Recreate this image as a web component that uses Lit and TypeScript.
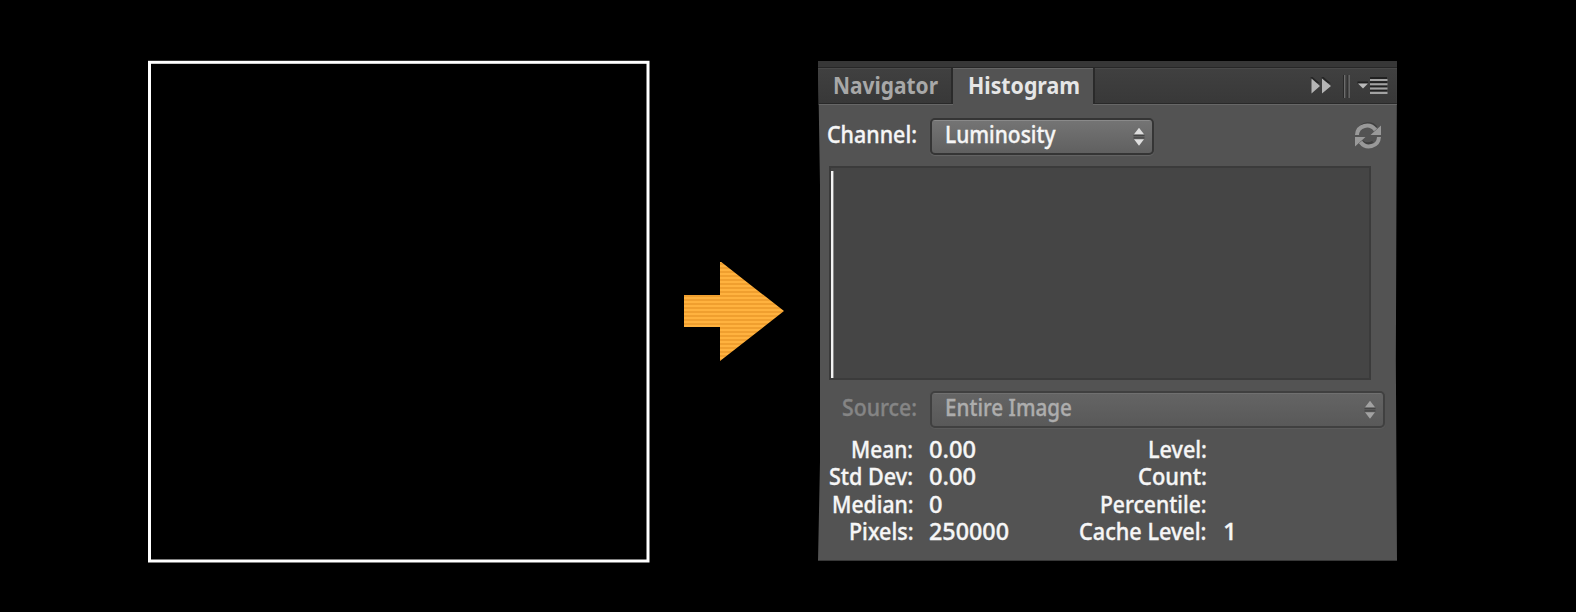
import { LitElement, html, css } from "lit";
import { customElement } from "lit/decorators.js";

/* Fixed-measure label: the glyphs are fitted to the given advance width. */
const label = (text: string, width: number, cls = "") => html`
  <svg class="label ${cls}" width=${width} height="28">
    <text x="0" y="22" textLength=${width} lengthAdjust="spacingAndGlyphs">${text}</text>
  </svg>`;

const steppers = html`<svg class="steppers" width="12" height="20" viewBox="0 0 12 20">
  <path class="shade" d="M.5 8H11.5V9.2H.5ZM.5 10.3H11.5V11.5H.5Z" />
  <path d="M6 .8 11 7.3H1ZM1 12.2H11L6 18.8Z" />
</svg>`;

const stats: [string, number, string, number, string, number, string, number][] = [
  ["Mean:", 62, "0.00", 47, "Level:", 59, "", 0],
  ["Std Dev:", 84, "0.00", 47, "Count:", 69, "", 0],
  ["Median:", 81.5, "0", 13.5, "Percentile:", 106.5, "", 0],
  ["Pixels:", 64.5, "250000", 80, "Cache Level:", 127.5, "1", 14],
];

@customElement("histogram-panel")
class HistogramPanel extends LitElement {
  static styles = css`
    :host {
      display: block;
      box-sizing: border-box;
      width: 579px;
      height: 500px;
      background: #535353;
      border-bottom: 1px solid #383838;
      clip-path: polygon(0 0, 100% 0, 99.8% 60%, 100% 100%, 0 100%, 2px 80%, 2px 25%);
      font-family: "Noto Sans", "Open Sans", sans-serif;
    }
    .label { display: block; overflow: visible; flex: none; }
    .label text {
      font-size: 23.4px;
      font-weight: 500;
      fill: #f6f6f6;
      stroke: #f6f6f6;
      stroke-width: 0.35px;
    }
    .label.bold text { font-weight: 700; font-size: 22.8px; fill: #e6e6e6; stroke: none; }
    .label.muted text { fill: #a8a8a8; }
    .label.dim text { fill: #858585; stroke: #858585; }
    .label.off text { fill: #adadad; stroke: #adadad; }
    .strip { height: 6px; background: #373737; border-bottom: 1px solid #272727; }
    .tabs {
      display: flex;
      height: 36px;
      background: linear-gradient(#4a4a4a 0 1px, #404040 1px, #383838);
    }
    .tab {
      box-sizing: border-box;
      height: 36px;
      padding: 4px 0 0 14.5px;
      border-bottom: 1px solid #292929;
    }
    .first { width: 135px; border-right: 2px solid #2a2a2a; }
    .active {
      width: 140px;
      height: 37px;
      border: 0;
      border-top: 1px solid #666;
      padding-top: 3px;
      background: #535353;
    }
    .tools {
      flex: 1;
      display: flex;
      justify-content: flex-end;
      box-sizing: border-box;
      height: 36px;
      padding: 5px 8px 0 0;
      border-left: 2px solid #2a2a2a;
      border-bottom: 1px solid #292929;
    }
    .edge { display: grid; grid-template-columns: 135px 140px 1fr; height: 1px; }
    .edge i { background: #676767; }
    .edge i:nth-child(2) { background: transparent; }
    .row { display: flex; height: 37px; }
    .channel { margin-top: 13px; }
    .caption {
      box-sizing: border-box;
      display: flex;
      justify-content: flex-end;
      width: 112px;
      padding: 3px 13px 0 0;
    }
    .select {
      box-sizing: border-box;
      display: flex;
      justify-content: space-between;
      width: 224px;
      height: 37px;
      padding: 1px 7px 0 13px;
      border: 2px solid #353535;
      border-radius: 5px;
      background: linear-gradient(#8a8a8a 0 1px, #747474 1px, #606060);
      box-shadow: 0 1px 1px #656565;
    }
    .steppers { margin-top: 6px; fill: #dedede; }
    .steppers .shade { fill: #454545; }
    .wide {
      width: 455px;
      border-color: #404040;
      background: linear-gradient(#707070 0 1px, #646464 1px, #595959);
      box-shadow: 0 1px 1px #5c5c5c;
    }
    .wide .steppers { fill: #a2a2a2; }
    .refresh { margin: 3px 0 0 200px; }
    .plot {
      box-sizing: border-box;
      width: 542px;
      height: 214px;
      margin: 11px 0 0 11px;
      padding: 3px 0 0 0;
      border: 2px solid #3b3b3b;
      background: #454545;
    }
    .bar {
      width: 2px;
      height: 207px;
      background: #f2f2f2;
      border-right: 1px solid #8a8a8a;
    }
    .source { margin-top: 11px; }
    .stats {
      display: grid;
      grid-template-columns: 95px 81px 180px 40px;
      grid-auto-rows: 27.4px;
      column-gap: 16.3px;
      margin-top: 8px;
    }
    .end { display: flex; justify-content: flex-end; }
  `;

  render() {
    return html`
      <div class="strip"></div>
      <div class="tabs">
        <div class="tab first">${label("Navigator", 105, "bold muted")}</div>
        <div class="tab active">${label("Histogram", 112, "bold")}</div>
        <div class="tools">
          <svg width="80" height="26" viewBox="0 0 80 26">
            <path fill="#262626" d="M1.500 4H3.500L11 10.500 3 9ZM12.500 4H14.500L22 10.500 14 9Z" />
            <path fill="#b5b5b5" d="M2.500 5.500 11 13 2.500 20.500ZM13 5.500 22 13 13 20.500Z" />
            <path fill="#292929" d="M34 2H35V25H34ZM38.500 2H39.500V25H38.500Z" />
            <path fill="#6c6c6c" d="M35 2H36.300V25H35ZM39.500 2H40.800V25H39.500Z" />
            <path fill="#202020" d="M48.500 8.500H59V10.500H48.500ZM61 4H78V6H61ZM61 8.300H78V10.300H61ZM61 12.600H78V14.600H61ZM61 16.800H78V18.800H61Z" />
            <path fill="#b9b9b9" d="M49 10.500H59L54 15.500Z" />
            <path fill="#a2a2a2" d="M61 6H78.500V8H61ZM61 10.300H78.500V12.300H61ZM61 14.600H78.500V16.600H61ZM61 18.800H78.500V21H61Z" />
          </svg>
        </div>
      </div>
      <div class="edge"><i></i><i></i><i></i></div>
      <div class="row channel">
        <div class="caption">${label("Channel:", 90)}</div>
        <div class="select">${label("Luminosity", 110.5)}${steppers}</div>
        <svg class="refresh" width="28" height="30" viewBox="0 0 28 30">
          <path fill="none" stroke="#3f3f3f" stroke-width="3" d="M4 10C8 1 18 1 22 6.500M8 20.500Q13 25 19 21" />
          <g fill="none" stroke="#999" stroke-width="4">
            <path d="M3 14C3.500 4 16 1.500 21.500 9" />
            <path d="M25 16C24.500 26 12 28.500 6.500 21" />
          </g>
          <path fill="#999" d="M27 4.500V14H16.500ZM1 25.500V16H11.500Z" />
        </svg>
      </div>
      <div class="plot"><div class="bar"></div></div>
      <div class="row source">
        <div class="caption">${label("Source:", 75, "dim")}</div>
        <div class="select wide">${label("Entire Image", 127, "off")}${steppers}</div>
      </div>
      <div class="stats">
        ${stats.map(
          ([a, aw, b, bw, c, cw, d, dw]) => html`
            <div class="end">${label(a, aw)}</div>
            <div>${label(b, bw)}</div>
            <div class="end">${label(c, cw)}</div>
            <div>${d ? label(d, dw) : ""}</div>`
        )}
      </div>
    `;
  }
}

@customElement("app-root")
class AppRoot extends LitElement {
  static styles = css`
    :host { display: block; width: 1576px; height: 612px; background: #000; overflow: hidden; }
    .scene {
      display: flex;
      align-items: flex-start;
      box-sizing: border-box;
      height: 612px;
      padding: 60px 0 0 148px;
    }
    .arrow { margin: 202px 34px 0; }
    histogram-panel { margin-top: 1px; flex: none; }
  `;

  render() {
    return html`<div class="scene">
      <svg width="502" height="503" viewBox="0 0 502 503">
        <rect x="1.500" y="2.300" width="498.500" height="498.700" fill="#000" stroke="#fff" stroke-width="3" />
      </svg>
      <svg class="arrow" width="100" height="100" viewBox="0 0 100 100">
        <defs>
          <pattern id="stripes" width="4" height="4" patternUnits="userSpaceOnUse">
            <rect width="4" height="4" fill="#ffb23f" />
            <rect y="1" width="4" height="2" fill="#f09f2f" />
          </pattern>
        </defs>
        <path fill="url(#stripes)" d="M0 33H36V-1L100 49 36 99V65H0Z" />
      </svg>
      <histogram-panel></histogram-panel>
    </div>`;
  }
}
